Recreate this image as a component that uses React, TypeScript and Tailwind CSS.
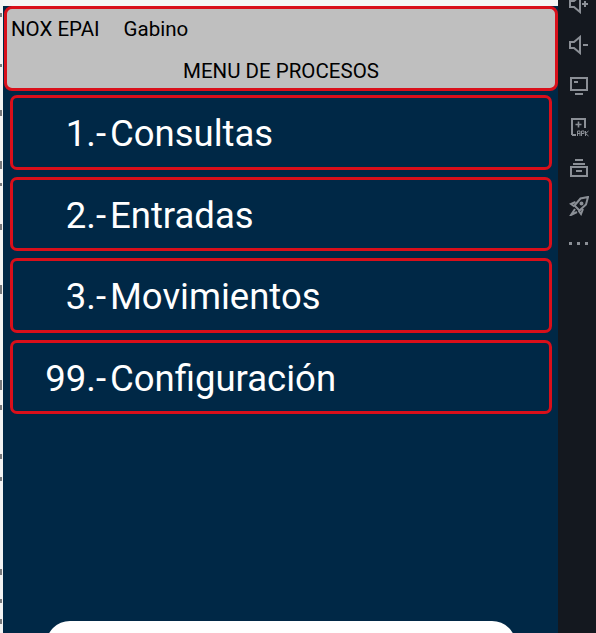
const rows = [
  { num: "1.-", label: "Consultas", h: "h-[75px]" },
  { num: "2.-", label: "Entradas", h: "h-[74px]" },
  { num: "3.-", label: "Movimientos", h: "h-[75px]" },
  { num: "99.-", label: "Configuración", h: "h-[74px]" },
];

// bits of the window behind, showing along the left edge
const edgeMarks = [
  "mt-[13px] h-[4px]",
  "mt-[47px] h-[3px]",
  "mt-[43px] h-[6px]",
  "mt-[45px] h-[8px]",
  "mt-[14px] h-[3px]",
  "mt-[38px] h-[6px]",
  "mt-[55px] h-[9px]",
  "mt-[86px] h-[10px]",
  "mt-[15px] h-[5px]",
  "mt-[44px] h-[5px]",
  "mt-[18px] h-[4px]",
  "mt-[88px] h-[6px]",
  "mt-[24px] h-[4px]",
  "mt-[16px] h-[5px]",
];

function SideIcons() {
  return (
    <div className="flex flex-col items-center gap-[21px] -mt-[6px] pl-[3px] text-[#8b8f96]">
      {/* volume up */}
      <svg width="20" height="20" viewBox="0 0 20 20" fill="none" stroke="currentColor" strokeWidth="2">
        <path d="M1 7h4l6-5v16l-6-5H1z" />
        <path d="M13 10h6M16 7v6" />
      </svg>
      {/* volume down */}
      <svg width="20" height="20" viewBox="0 0 20 20" fill="none" stroke="currentColor" strokeWidth="2">
        <path d="M1 7h4l6-5v16l-6-5H1z" />
        <path d="M14 10h5" />
      </svg>
      {/* screen */}
      <svg width="20" height="20" viewBox="0 0 20 20" fill="none" stroke="currentColor" strokeWidth="2">
        <rect x="2" y="2" width="16" height="12" />
        <path d="M5 6h4M6 18h8" />
      </svg>
      {/* apk */}
      <svg width="20" height="20" viewBox="0 0 20 20" fill="none" stroke="currentColor" strokeWidth="1.6">
        <path d="M3 18V2h13v9M3 18h4" strokeWidth="2" />
        <path d="M9.5 4.5v6M6.5 7.5h6" />
        <path d="M8.5 19v-5h2.5v5M8.5 16.5h2.5M12.5 19v-5h2.5v2.5h-2.5M16.5 14v5M19.5 14l-3 2.5 3 2.5" strokeWidth="1" />
      </svg>
      {/* toolbox */}
      <svg width="20" height="20" viewBox="0 0 20 20" fill="none" stroke="currentColor" strokeWidth="2">
        <path d="M6 2h8M4 6h12" />
        <rect x="2" y="9" width="16" height="9" />
        <path d="M7 13h6" />
      </svg>
      {/* rocket */}
      <svg className="-mt-[3px]" width="20" height="20" viewBox="0 0 20 20" fill="none" stroke="currentColor" strokeWidth="2">
        <path d="M19 1 11.500 2.500 5.500 9.500l5 5 6.500-6z" />
        <path d="M6.500 6 2 8l3.500 2.500M14 13l-2 5-2.500-3.500M6 13l-4 6 6-3" />
        <circle cx="12.500" cy="7.500" r="1" />
      </svg>
      {/* more */}
      <div className="flex gap-[5px] mt-[5px]">
        <div className="w-[3px] h-[3px] bg-current" />
        <div className="w-[3px] h-[3px] bg-current" />
        <div className="w-[3px] h-[3px] bg-current" />
      </div>
    </div>
  );
}

export default function App() {
  return (
    <div className="flex h-[633px] w-[596px] overflow-hidden bg-[#14181f] font-['Roboto',sans-serif]">
      <div className="flex w-[3px] shrink-0 flex-col bg-[#f3f3f3]">
        {edgeMarks.map((mark, i) => (
          <div key={i} className={`w-[2px] bg-[#77797c] ${mark}`} />
        ))}
      </div>

      <div className="flex w-[555px] shrink-0 flex-col bg-[#002846]">
        {/* top strip */}
        <div className="h-[6px] shrink-0 bg-[#f5f5f5]" />

        <div className="ml-[1px] h-[85px] shrink-0 rounded-[8px] border-[3px] border-[#d90f1a] bg-[#bfbfbf] text-[20.5px] leading-[24px] text-black">
          <div className="flex pl-[4px] pt-[8px]">
            <span>NOX EPAI</span>
            <span className="ml-[24px]">Gabino</span>
          </div>
          <p className="mt-[18px] text-center">MENU DE PROCESOS</p>
        </div>

        <div className="mt-[4px] flex flex-col gap-[7px] pl-[7px] pr-[6px]">
          {rows.map((row) => (
            <div
              key={row.label}
              className={`flex items-center rounded-[7px] border-[3px] border-[#d90f1a] pt-[4px] text-[36.500px] text-white ${row.h}`}
            >
              <span className="w-[93px] text-right">{row.num}</span>
              <span className="ml-[4px]">{row.label}</span>
            </div>
          ))}
        </div>

        {/* bottom button, cut by the window */}
        <div className="ml-[43px] mr-[42px] mt-auto h-[12px] shrink-0 overflow-hidden">
          <div className="h-[48px] rounded-[24px] bg-white" />
        </div>
      </div>

      <div className="flex-1 overflow-hidden">
        <SideIcons />
      </div>
    </div>
  );
}
